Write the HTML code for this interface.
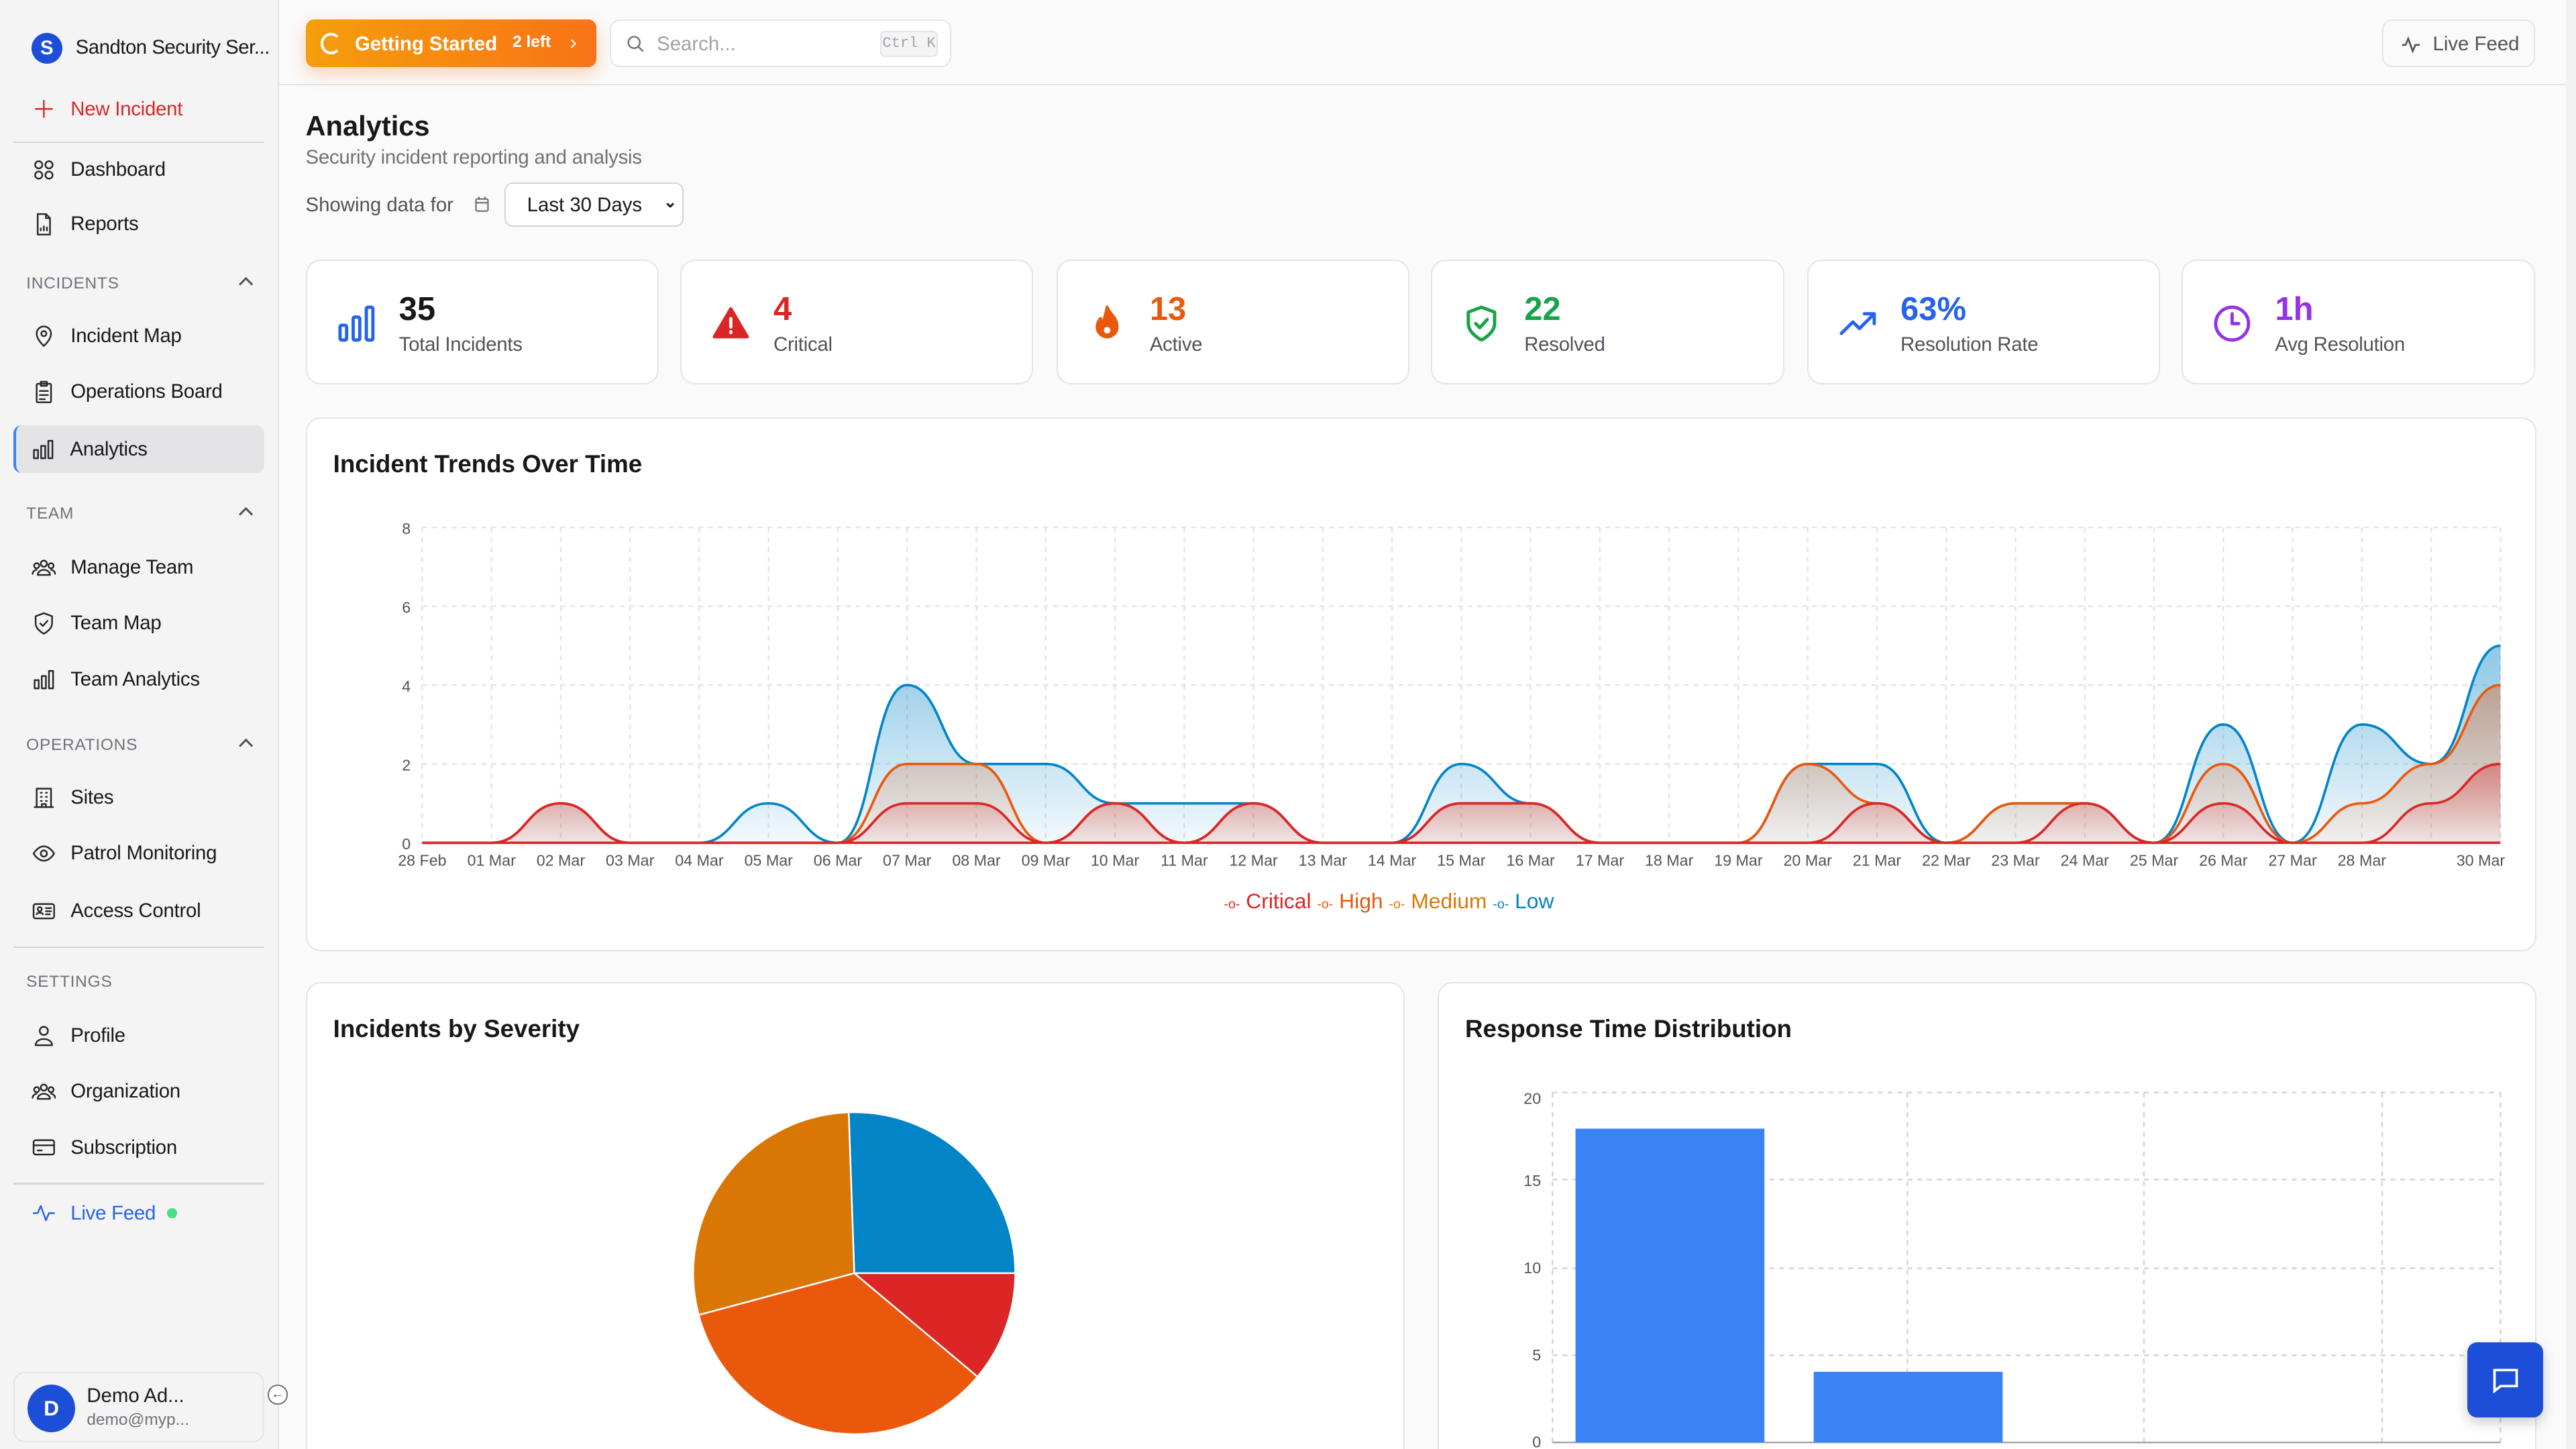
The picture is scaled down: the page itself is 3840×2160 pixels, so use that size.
<!DOCTYPE html>
<html><head><meta charset="utf-8"><style>
*{box-sizing:border-box;margin:0;padding:0}
html,body{width:3840px;height:2160px;overflow:hidden;background:#fafafa}
#w{zoom:2.44898;width:1568px;height:882px;position:relative;font-family:"Liberation Sans",sans-serif;color:#18181b;font-size:12px}
.a{position:absolute}
.sb{left:0;top:0;width:170px;height:882px;background:#f4f4f5;border-right:1px solid #e4e4e7}
.it{position:absolute;left:8px;width:153px;height:29px;display:flex;align-items:center;padding-left:11px;font-size:12px;color:#18181b;border-radius:5px;letter-spacing:-.1px}
.it svg{width:15px;height:15px;margin-right:9px;fill:none;stroke:#27272a;stroke-width:1.6;stroke-linecap:round;stroke-linejoin:round}
.sec{position:absolute;left:16px;font-size:10px;color:#71717a;letter-spacing:.3px;width:137px}
.sec:after{content:"";position:absolute;right:0;top:3px;width:5px;height:5px;border-left:1.3px solid #52525b;border-top:1.3px solid #52525b;transform:rotate(45deg)}
.hr{position:absolute;left:8px;width:153px;height:1px;background:#d4d4d8}
.card{position:absolute;background:#fff;border:1px solid #e4e4e7;border-radius:9px}
.st{top:158px;width:215px;height:76px}
.st .n{position:absolute;left:56px;top:18px;font-size:20px;font-weight:bold}
.st .l{position:absolute;left:56px;top:44px;font-size:12px;color:#52525b;letter-spacing:-.1px}
.st svg{position:absolute;left:18px;top:26px;width:24px;height:24px;fill:none;stroke-width:2;stroke-linecap:round;stroke-linejoin:round}
.ct{position:absolute;left:16px;top:19px;font-size:15px;font-weight:bold}
</style></head><body><div id="w">
<div class="a sb">
 <div class="a" style="left:19px;top:20px;width:19px;height:19px;border-radius:50%;background:#1d4ed8;color:#fff;font-weight:bold;font-size:12px;text-align:center;line-height:19px">S</div>
 <div class="a" style="left:46px;top:22px;font-size:12px;white-space:nowrap;letter-spacing:-.2px">Sandton Security Ser...</div>
 <div class="it" style="top:52px;color:#dc2626"><svg viewBox="0 0 24 24" style="stroke:#dc2626"><path d="M12 4v16M4 12h16"/></svg>New Incident</div>
 <div class="hr" style="top:86px"></div>
 <div class="it" style="top:89px"><svg viewBox="0 0 24 24"><circle cx="7" cy="7" r="3.5"/><circle cx="17" cy="7" r="3.5"/><circle cx="7" cy="17" r="3.5"/><circle cx="17" cy="17" r="3.5"/></svg>Dashboard</div>
 <div class="it" style="top:122px"><svg viewBox="0 0 24 24"><path d="M14 2H6v20h12V6z M14 2v4h4 M9 18v-2M12 18v-4M15 18v-3"/></svg>Reports</div>
 <div class="sec" style="top:167px">INCIDENTS</div>
 <div class="it" style="top:190px"><svg viewBox="0 0 24 24"><path d="M12 22s7-6 7-12a7 7 0 0 0-14 0c0 6 7 12 7 12z"/><circle cx="12" cy="10" r="2.5"/></svg>Incident Map</div>
 <div class="it" style="top:224px"><svg viewBox="0 0 24 24"><rect x="5" y="4" width="14" height="18" rx="1"/><rect x="9" y="2" width="6" height="4"/><path d="M8 11h8M8 15h8M8 19h5"/></svg>Operations Board</div>
 <div class="it" style="top:259px;background:#e4e4e7;border-left:2px solid #3b82f6;padding-left:9px"><svg viewBox="0 0 24 24"><rect x="3" y="13" width="4" height="8"/><rect x="10" y="9" width="4" height="12"/><rect x="17" y="4" width="4" height="17"/></svg>Analytics</div>
 <div class="sec" style="top:307px">TEAM</div>
 <div class="it" style="top:331px"><svg viewBox="0 0 24 24"><circle cx="12" cy="8" r="3"/><circle cx="5" cy="10" r="2.5"/><circle cx="19" cy="10" r="2.5"/><path d="M6 19c0-3 3-5 6-5s6 2 6 5zM1 18c0-2 2-4 4-4M23 18c0-2-2-4-4-4"/></svg>Manage Team</div>
 <div class="it" style="top:365px"><svg viewBox="0 0 24 24"><path d="M12 22s8-4 8-10V5l-8-3-8 3v7c0 6 8 10 8 10z M8.5 12l2.5 2.5 4.5-5"/></svg>Team Map</div>
 <div class="it" style="top:399px"><svg viewBox="0 0 24 24"><rect x="3" y="13" width="4" height="8"/><rect x="10" y="9" width="4" height="12"/><rect x="17" y="4" width="4" height="17"/></svg>Team Analytics</div>
 <div class="sec" style="top:448px">OPERATIONS</div>
 <div class="it" style="top:471px"><svg viewBox="0 0 24 24"><path d="M5 21V3h14v18M3 21h18M9 7h1M14 7h1M9 11h1M14 11h1M9 15h1M14 15h1M10 21v-3h4v3"/></svg>Sites</div>
 <div class="it" style="top:505px"><svg viewBox="0 0 24 24"><path d="M2 12s4-7 10-7 10 7 10 7-4 7-10 7S2 12 2 12z"/><circle cx="12" cy="12" r="3"/></svg>Patrol Monitoring</div>
 <div class="it" style="top:540px"><svg viewBox="0 0 24 24"><rect x="2" y="5" width="20" height="14" rx="2"/><circle cx="8" cy="10" r="2"/><path d="M5 15c0-2 6-2 6 0M14 9h5M14 12h5M14 15h4"/></svg>Access Control</div>
 <div class="hr" style="top:576px"></div>
 <div class="a" style="left:16px;top:592px;font-size:10px;color:#71717a;letter-spacing:.3px">SETTINGS</div>
 <div class="it" style="top:616px"><svg viewBox="0 0 24 24"><circle cx="12" cy="7" r="4"/><path d="M4 21c0-4 4-6 8-6s8 2 8 6z"/></svg>Profile</div>
 <div class="it" style="top:650px"><svg viewBox="0 0 24 24"><circle cx="12" cy="8" r="3"/><circle cx="5" cy="10" r="2.5"/><circle cx="19" cy="10" r="2.5"/><path d="M6 19c0-3 3-5 6-5s6 2 6 5zM1 18c0-2 2-4 4-4M23 18c0-2-2-4-4-4"/></svg>Organization</div>
 <div class="it" style="top:684px"><svg viewBox="0 0 24 24"><rect x="2" y="5" width="20" height="14" rx="2"/><path d="M2 10h20M6 15h4"/></svg>Subscription</div>
 <div class="hr" style="top:720px"></div>
 <div class="it" style="top:724px;color:#2563eb"><svg viewBox="0 0 24 24" style="stroke:#2563eb"><path d="M2 12h4l3-7 5 14 3-7h5"/></svg>Live Feed<span style="display:inline-block;width:6px;height:6px;border-radius:50%;background:#4ade80;margin-left:7px"></span></div>
 <div class="a" style="left:8px;top:835px;width:153px;height:43px;border:1px solid #e4e4e7;border-radius:7px;background:#f4f4f5">
  <div class="a" style="left:8px;top:7px;width:29px;height:29px;border-radius:50%;background:#1d4ed8;color:#fff;font-weight:bold;text-align:center;line-height:29px;font-size:13px">D</div>
  <div class="a" style="left:44px;top:7px;font-size:12px">Demo Ad...</div>
  <div class="a" style="left:44px;top:23px;font-size:10px;color:#71717a">demo@myp...</div>
 </div>
 <div class="a" style="left:163px;top:843px;width:12px;height:12px;border:1px solid #71717a;border-radius:50%;font-size:8px;line-height:10px;text-align:center;color:#52525b;background:#fff">←</div>
</div>
<!-- topbar -->
<div class="a" style="left:170px;top:51px;width:1398px;height:1px;background:#e4e4e7"></div>
<div class="a" style="left:186px;top:12px;width:177px;height:29px;border-radius:5px;background:linear-gradient(90deg,#f59e0b,#f97316);box-shadow:0 4px 10px rgba(249,115,22,.3);color:#fff;font-size:12px;font-weight:bold">
 <div class="a" style="left:9px;top:8px;width:13px;height:13px;border:2px solid #fff;border-radius:50%;border-right-color:transparent"></div>
 <div class="a" style="left:30px;top:8px">Getting Started</div>
 <div class="a" style="left:126px;top:8px;font-size:10px">2 left</div>
 <div class="a" style="left:161px;top:7px;font-size:12px;font-weight:normal">›</div>
</div>
<div class="a" style="left:371px;top:12px;width:208px;height:29px;border:1px solid #e4e4e7;border-radius:6px;background:#fff">
 <svg class="a" style="left:9px;top:8px" width="12" height="12" viewBox="0 0 24 24" fill="none" stroke="#71717a" stroke-width="2"><circle cx="10" cy="10" r="7"/><path d="M15 15l6 6"/></svg>
 <div class="a" style="left:28px;top:7px;color:#a1a1aa;font-size:12px">Search...</div>
 <div class="a" style="left:164px;top:6px;width:35px;height:16px;border-radius:3px;background:#f4f4f5;border:1px solid #e4e4e7;font-family:'Liberation Mono',monospace;font-size:9px;color:#a1a1aa;text-align:center;line-height:14px">Ctrl K</div>
</div>
<div class="a" style="left:1450px;top:12px;width:93px;height:29px;border:1px solid #e4e4e7;border-radius:6px;background:#fafafa;font-size:12px;color:#52525b">
 <svg class="a" style="left:10px;top:8px" width="13" height="13" viewBox="0 0 24 24" fill="none" stroke="#52525b" stroke-width="2"><path d="M2 12h4l3-7 5 14 3-7h5"/></svg>
 <div class="a" style="left:30px;top:7px">Live Feed</div>
</div>
<div class="a" style="left:1562px;top:0;width:6px;height:882px;background:#f1f1f1"></div>
<!-- header -->
<div class="a" style="left:186px;top:67px;font-size:17px;font-weight:bold">Analytics</div>
<div class="a" style="left:186px;top:89px;font-size:12px;color:#71717a;letter-spacing:-.1px">Security incident reporting and analysis</div>
<div class="a" style="left:186px;top:118px;font-size:12px;color:#52525b">Showing data for</div>
<svg class="a" style="left:288px;top:119px" width="11" height="11" viewBox="0 0 24 24" fill="none" stroke="#71717a" stroke-width="2"><rect x="4" y="5" width="16" height="16" rx="2"/><path d="M4 10h16M8 2v4M16 2v4"/></svg>
<div class="a" style="left:307px;top:111px;width:109px;height:27px;border:1px solid #d4d4d8;border-radius:5px;background:#fff;font-size:12px;padding:6px 0 0 13px">Last 30 Days<span class="a" style="left:96px;top:5px;font-size:10px;font-weight:bold">⌄</span></div>
<!-- stats -->
<div class="card st" style="left:186px"><svg viewBox="0 0 24 24" stroke="#2563eb"><rect x="2" y="13" width="4" height="9" rx="1"/><rect x="10" y="8" width="4" height="14" rx="1"/><rect x="18" y="2" width="4" height="20" rx="1"/></svg><div class="n">35</div><div class="l">Total Incidents</div></div>
<div class="card st" style="left:414px"><svg viewBox="0 0 24 24" stroke="#dc2626" style="fill:#dc2626"><path d="M12 3L2 20h20z"/><path d="M12 9v5M12 17v.5" stroke="#fff"/></svg><div class="n" style="color:#dc2626">4</div><div class="l">Critical</div></div>
<div class="card st" style="left:643px"><svg viewBox="0 0 24 24" stroke="#ea580c" style="fill:#ea580c"><path d="M12 2c1 4 6 6 6 12a6 6 0 0 1-12 0c0-3 2-5 2-5 0 2 1 3 2 3 0-4 2-7 2-10z"/><circle cx="12" cy="16" r="2" fill="#fff" stroke="none"/></svg><div class="n" style="color:#ea580c">13</div><div class="l">Active</div></div>
<div class="card st" style="left:871px"><svg viewBox="0 0 24 24" stroke="#16a34a"><path d="M12 22s8-4 8-10V5l-8-3-8 3v7c0 6 8 10 8 10z M8.5 12l2.5 2.5 4.5-5"/></svg><div class="n" style="color:#16a34a">22</div><div class="l">Resolved</div></div>
<div class="card st" style="left:1100px"><svg viewBox="0 0 24 24" stroke="#2563eb"><path d="M2 18l7-7 4 4 9-9M16 6h6v6"/></svg><div class="n" style="color:#2563eb">63%</div><div class="l">Resolution Rate</div></div>
<div class="card st" style="left:1328px"><svg viewBox="0 0 24 24" stroke="#9333ea"><circle cx="12" cy="12" r="10"/><path d="M12 6v6h4"/></svg><div class="n" style="color:#9333ea">1h</div><div class="l">Avg Resolution</div></div>
<!-- trend -->
<div class="card" style="left:186px;top:254px;width:1358px;height:325px"><div class="ct">Incident Trends Over Time</div></div>
<svg class="a" style="left:0;top:0" width="1568" height="882" id="tr" font-family="Liberation Sans" font-size="9.5" fill="#52525b"></svg>
<div class="a" style="left:745px;top:541px;font-size:13px;white-space:nowrap">
 <span style="color:#dc2626"><small style="font-size:8px">-o-</small> Critical</span> <span style="color:#ea580c"><small style="font-size:8px">-o-</small> High</span> <span style="color:#d97706"><small style="font-size:8px">-o-</small> Medium</span> <span style="color:#0284c7"><small style="font-size:8px">-o-</small> Low</span>
</div>
<!-- severity -->
<div class="card" style="left:186px;top:598px;width:669px;height:300px"><div class="ct">Incidents by Severity</div></div>
<svg class="a" style="left:0;top:0" width="1568" height="882">
 <g stroke="#fff" stroke-width="1">
 <path d="M520 775L516.6 677.1A98 98 0 0 1 618 775Z" fill="#0284c7"/>
 <path d="M520 775L618 775A98 98 0 0 1 595 838Z" fill="#dc2626"/>
 <path d="M520 775L595 838A98 98 0 0 1 425.3 800.4Z" fill="#ea580c"/>
 <path d="M520 775L425.3 800.4A98 98 0 0 1 516.6 677.1Z" fill="#d97706"/>
 </g>
</svg>
<!-- response -->
<div class="card" style="left:875px;top:598px;width:669px;height:300px"><div class="ct">Response Time Distribution</div></div>
<svg class="a" style="left:0;top:0" width="1568" height="882" font-family="Liberation Sans" font-size="9.5" fill="#52525b">
 <g stroke="#d4d4d8" stroke-dasharray="3 3" fill="none">
  <path d="M945 665H1522M945 718H1522M945 772H1522M945 825H1522M945 665V878M1161 665V878M1305 665V878M1450 665V878M1522 665V878"/>
 </g>
 <path d="M945 878H1522" stroke="#a1a1aa"/>
 <rect x="959" y="687" width="115" height="191" fill="#3b82f6"/>
 <rect x="1104" y="835" width="115" height="43" fill="#3b82f6"/>
 <g text-anchor="end"><text x="938" y="672">20</text><text x="938" y="722">15</text><text x="938" y="775">10</text><text x="938" y="828">5</text><text x="938" y="881">0</text></g>
</svg>
<div class="a" style="left:1502px;top:817px;width:46px;height:46px;border-radius:6px;background:#1d4ed8;box-shadow:0 3px 8px rgba(0,0,0,.2)">
 <svg class="a" style="left:14px;top:14px" width="18" height="18" viewBox="0 0 24 24" fill="none" stroke="#fff" stroke-width="2"><path d="M3 4h18v13H8l-5 4z"/></svg>
</div>
</div>
<script>
(function(){
var s=document.getElementById('tr'),h='';
var x0=257,x1=1522,dx=(x1-x0)/30,yb=513,u=24;
function X(i){return x0+i*dx}function Y(v){return yb-v*u}
for(var i=0;i<=30;i++)h+='<path d="M'+X(i)+' 321V513" stroke="#e4e4e7" stroke-dasharray="3 3"/>';
for(var v=0;v<=8;v+=2)h+='<path d="M'+x0+' '+Y(v)+'H'+x1+'" stroke="#e4e4e7" stroke-dasharray="3 3"/><text x="250" y="'+(Y(v)+4)+'" text-anchor="end">'+v+'</text>';
var d=['28 Feb','01 Mar','02 Mar','03 Mar','04 Mar','05 Mar','06 Mar','07 Mar','08 Mar','09 Mar','10 Mar','11 Mar','12 Mar','13 Mar','14 Mar','15 Mar','16 Mar','17 Mar','18 Mar','19 Mar','20 Mar','21 Mar','22 Mar','23 Mar','24 Mar','25 Mar','26 Mar','27 Mar','28 Mar','','30 Mar'];
for(i=0;i<=30;i++)if(d[i])h+='<text x="'+(i==30?X(i)-12:X(i))+'" y="527" text-anchor="middle">'+d[i]+'</text>';
var T=[0,0,1,0,0,1,0,4,2,2,1,1,1,0,0,2,1,0,0,0,2,2,0,1,1,0,3,0,3,2,5];
var H=[0,0,1,0,0,0,0,2,2,0,1,0,1,0,0,1,1,0,0,0,2,1,0,1,1,0,2,0,1,2,4];
var C=[0,0,1,0,0,0,0,1,1,0,1,0,1,0,0,1,1,0,0,0,0,1,0,0,1,0,1,0,0,1,2];
function p(a){var r='M'+X(0)+' '+Y(a[0]);for(var i=1;i<a.length;i++){var m=(X(i-1)+X(i))/2;r+='C'+m+' '+Y(a[i-1])+' '+m+' '+Y(a[i])+' '+X(i)+' '+Y(a[i])}return r}
h+='<defs><linearGradient id="gb" x1="0" y1="0" x2="0" y2="1"><stop offset="0" stop-color="#0284c7" stop-opacity=".45"/><stop offset="1" stop-color="#0284c7" stop-opacity=".05"/></linearGradient><linearGradient id="go" x1="0" y1="0" x2="0" y2="1"><stop offset="0" stop-color="#ea580c" stop-opacity=".4"/><stop offset="1" stop-color="#ea580c" stop-opacity=".05"/></linearGradient><linearGradient id="gr" x1="0" y1="0" x2="0" y2="1"><stop offset="0" stop-color="#dc2626" stop-opacity=".4"/><stop offset="1" stop-color="#dc2626" stop-opacity=".05"/></linearGradient></defs>';
[[T,'#0284c7','gb'],[H,'#ea580c','go'],[C,'#dc2626','gr']].forEach(function(q){var P=p(q[0]);h+='<path d="'+P+'L'+x1+' '+yb+'L'+x0+' '+yb+'Z" fill="url(#'+q[2]+')"/><path d="'+P+'" fill="none" stroke="'+q[1]+'" stroke-width="1.5"/>';});
h+='<path d="M'+x0+' '+yb+'H'+x1+'" stroke="#dc2626" stroke-width="1.5"/>';
s.innerHTML=h;})();
</script>
</body></html>
